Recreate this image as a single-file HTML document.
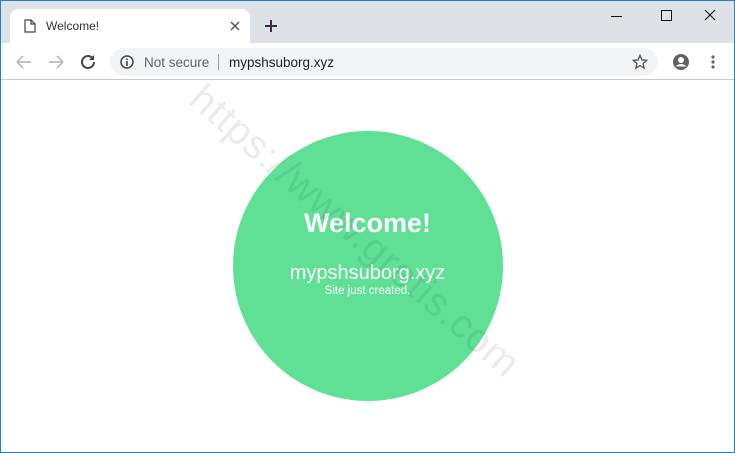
<!DOCTYPE html>
<html><head><meta charset="utf-8"><style>
*{margin:0;padding:0;box-sizing:border-box}
html,body{width:735px;height:453px;overflow:hidden;background:#fff;font-family:"Liberation Sans",Arial,sans-serif}
.win{position:absolute;left:0;top:0;width:735px;height:453px;border:1px solid #1883d7}
.strip{position:absolute;left:0;top:0;width:733px;height:42px;background:#dee1e6}
.tab{position:absolute;left:9px;top:8px;width:240px;height:34px;background:#fff;border-radius:8px 8px 0 0}
.tab .t{position:absolute;left:36px;top:10px;font-size:12px;color:#333}
.tool{position:absolute;left:0;top:42px;width:733px;height:37px;background:#fff;border-bottom:1px solid #c8c8c8}
.omni{position:absolute;left:109px;top:47px;width:548px;height:28px;background:#f1f3f4;border-radius:14px}
.omni .ns{position:absolute;left:34px;top:7px;font-size:13.5px;color:#5f6368}
.omni .sep{position:absolute;left:108px;top:6px;width:1px;height:16px;background:#9aa0a6}
.omni .u{position:absolute;left:119px;top:7px;font-size:13.5px;color:#202124}
.circle{position:absolute;left:233px;top:131px;width:270px;height:270px;border-radius:50%;background:#5fe095}
.wm{position:absolute;left:210px;top:76px;font-size:40px;color:rgba(0,0,0,.08);transform:rotate(41deg);transform-origin:0 0;white-space:nowrap;letter-spacing:1px}
.w{position:absolute;left:0;width:735px;text-align:center;color:#fff}
</style></head><body>
<div class="win">
<div class="strip"></div>
<div class="tab"><svg style="position:absolute;left:14px;top:10px" width="12" height="14" viewBox="0 0 12 14"><path d="M1 1h6l4 4v8H1z M7 1v4h4" fill="none" stroke="#444" stroke-width="1.2"/></svg><span class="t">Welcome!</span>
<svg style="position:absolute;left:220px;top:12px" width="10" height="10"><path d="M1 1L9 9M9 1L1 9" stroke="#555" stroke-width="1.5"/></svg></div>
<svg style="position:absolute;left:263px;top:18px" width="14" height="14"><path d="M7 1v12M1 7h12" stroke="#3c2a44" stroke-width="2"/></svg>
<svg style="position:absolute;left:610px;top:8px" width="110" height="14"><path d="M0 7.5h11" stroke="#111"/><rect x="50.5" y="1.5" width="10" height="10" fill="none" stroke="#111"/><path d="M94 1l10 10M104 1L94 11" stroke="#111" stroke-width="1.1"/></svg>
<div class="tool"></div>
<svg style="position:absolute;left:14px;top:53px" width="80" height="16"><path d="M2 8h14M2 8l6-6M2 8l6 6" fill="none" stroke="#bbb" stroke-width="1.8"/><path d="M48 8h-14M48 8l-6-6M48 8l-6 6" fill="none" stroke="#bbb" stroke-width="1.8"/><path d="M79 8a6 6 0 1 1-2-4.5" fill="none" stroke="#444" stroke-width="2"/><path d="M79 1v5h-5z" fill="#444"/></svg>
<div class="omni"><svg style="position:absolute;left:10px;top:7px" width="14" height="14"><circle cx="7" cy="7" r="6" fill="none" stroke="#444" stroke-width="1.5"/><path d="M7 6v5M7 3.5v1.5" stroke="#444" stroke-width="1.6"/></svg><span class="ns">Not secure</span><span class="sep"></span><span class="u">mypshsuborg.xyz</span>
<svg style="position:absolute;left:522px;top:6px" width="16" height="16" viewBox="0 0 24 24"><path d="M12 2l2.9 6.9 7.1.6-5.4 4.7 1.6 7-6.2-3.8-6.2 3.8 1.6-7L2 9.5l7.1-.6z" fill="none" stroke="#555" stroke-width="2"/></svg></div>
<svg style="position:absolute;left:671px;top:52px" width="18" height="18"><circle cx="9" cy="9" r="8" fill="#5f6368"/><circle cx="9" cy="7" r="3" fill="#fff"/><path d="M3.5 13.5q5.5-5 11 0" fill="#fff"/></svg>
<svg style="position:absolute;left:709px;top:54px" width="6" height="16"><circle cx="3" cy="2" r="1.6" fill="#5f6368"/><circle cx="3" cy="7" r="1.6" fill="#5f6368"/><circle cx="3" cy="12" r="1.6" fill="#5f6368"/></svg>
</div>
<div class="circle"></div>
<div class="w" style="top:208px;font-size:27px;font-weight:bold">Welcome!</div>
<div class="w" style="top:262px;font-size:20px">mypshsuborg.xyz</div>
<div class="w" style="top:285px;font-size:11.5px">Site just created.</div>
<div class="wm">https://www.gretis.com</div>
</body></html>
